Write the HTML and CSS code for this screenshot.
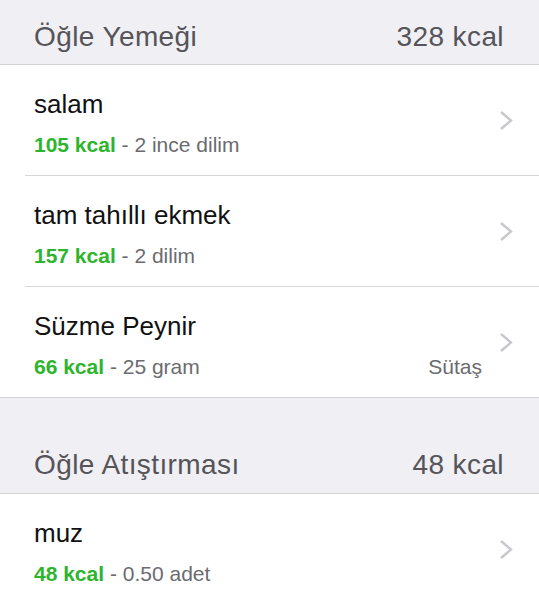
FILE: index.html
```html
<!DOCTYPE html>
<html lang="tr">
<head>
<meta charset="UTF-8">
<title>Öğle Yemeği</title>
<link rel="stylesheet" href="styles.css">
</head>
<body>

  <!-- Öğle Yemeği -->
  <div class="section-head">
    <span>Öğle Yemeği</span>
    <span>328 kcal</span>
  </div>
  <div class="group">
    <div class="row">
      <div class="row-inner">
        <div class="info">
          <div class="title">salam</div>
          <div class="sub"><span><b class="kcal">105 kcal</b> - 2 ince dilim</span></div>
        </div>
        <svg class="chev" width="15" height="21" viewBox="0 0 15 21"><polyline points="2,2 12,10.5 2,19" fill="none" stroke="#c7c7cc" stroke-width="2.4"/></svg>
      </div>
    </div>
    <div class="row">
      <div class="row-inner">
        <div class="info">
          <div class="title">tam tahıllı ekmek</div>
          <div class="sub"><span><b class="kcal">157 kcal</b> - 2 dilim</span></div>
        </div>
        <svg class="chev" width="15" height="21" viewBox="0 0 15 21"><polyline points="2,2 12,10.5 2,19" fill="none" stroke="#c7c7cc" stroke-width="2.4"/></svg>
      </div>
    </div>
    <div class="row">
      <div class="row-inner">
        <div class="info">
          <div class="title">Süzme Peynir</div>
          <div class="sub"><span><b class="kcal">66 kcal</b> - 25 gram</span><span>Sütaş</span></div>
        </div>
        <svg class="chev" width="15" height="21" viewBox="0 0 15 21"><polyline points="2,2 12,10.5 2,19" fill="none" stroke="#c7c7cc" stroke-width="2.4"/></svg>
      </div>
    </div>
  </div>

  <!-- Öğle Atıştırması -->
  <div class="section-head spaced">
    <span>Öğle Atıştırması</span>
    <span>48 kcal</span>
  </div>
  <div class="group">
    <div class="row">
      <div class="row-inner">
        <div class="info">
          <div class="title">muz</div>
          <div class="sub"><span><b class="kcal">48 kcal</b> - 0.50 adet</span></div>
        </div>
        <svg class="chev" width="15" height="21" viewBox="0 0 15 21"><polyline points="2,2 12,10.5 2,19" fill="none" stroke="#c7c7cc" stroke-width="2.4"/></svg>
      </div>
    </div>
  </div>

</body>
</html>
```

FILE: styles.css
```css
body {
  margin: 0;
  background: #efeff4;
  font-family: "Liberation Sans", Arial, sans-serif;
  color: #111;
}

.section-head {
  display: flex;
  justify-content: space-between;
  padding: 21px 35px 11px 34px;
  font-size: 28px;
  letter-spacing: 0.4px;
  line-height: 32px;
  color: #555459;
  border-bottom: 1px solid #d2d2d6;
}

.section-head.spaced {
  padding-top: 51px;
  padding-bottom: 12px;
}

.group {
  background: #fff;
  border-bottom: 1px solid #d2d2d6;
}

.row {
  padding-left: 25px;
}

.row-inner {
  display: flex;
  align-items: center;
  height: 110px;
  padding-left: 9px;
  padding-right: 25px;
  border-bottom: 1px solid #d6d6da;
}

.row:last-child .row-inner {
  border-bottom: none;
}

.info {
  flex: 1;
  align-self: flex-start;
  padding-top: 24px;
}

.title {
  font-size: 26px;
  line-height: 30px;
  color: #111;
}

.sub {
  display: flex;
  justify-content: space-between;
  margin-top: 14px;
  font-size: 21px;
  line-height: 24px;
  color: #6b6b70;
}

.kcal {
  color: #2db52d;
  font-weight: bold;
}

.chev {
  margin-left: 17px;
}
```
